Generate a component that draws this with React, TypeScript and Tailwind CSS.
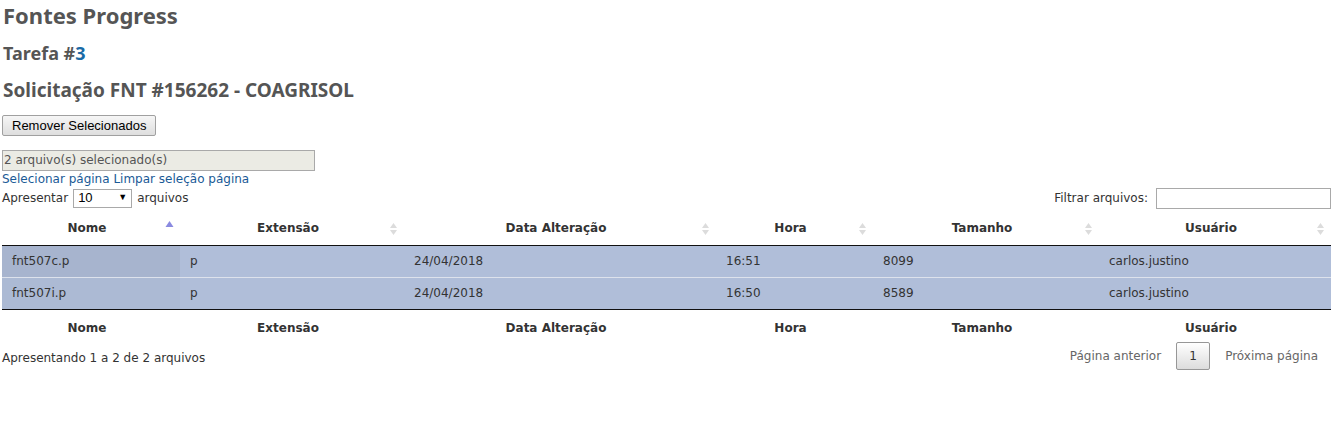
import React from "react"

const cols = [
  { label: "Nome", w: 178, sorted: true },
  { label: "Extensão", w: 224 },
  { label: "Data Alteração", w: 312 },
  { label: "Hora", w: 157 },
  { label: "Tamanho", w: 226 },
  { label: "Usuário", w: 232 },
]

const rows = [
  ["fnt507c.p", "p", "24/04/2018", "16:51", "8099", "carlos.justino"],
  ["fnt507i.p", "p", "24/04/2018", "16:50", "8589", "carlos.justino"],
]

function SortIcon({ sorted }: { sorted?: boolean }) {
  if (sorted) {
    return (
      <svg width="9" height="8" viewBox="0 0 9 8" className="absolute right-[6px] top-[8px]">
        <path d="M4.5 1 L8.5 7 L0.5 7 Z" fill="#8a8ae0" />
      </svg>
    )
  }
  return (
    <svg width="9" height="14" viewBox="0 0 9 14" className="absolute right-[6px] top-[10px]">
      <path d="M4.5 1 L8 6 L1 6 Z" fill="#dcdcdc" />
      <path d="M4.5 13 L8 8 L1 8 Z" fill="#dcdcdc" />
    </svg>
  )
}

export default function App() {
  const body = "font-['DejaVu_Sans',Verdana,sans-serif] text-[12px] text-[#333]"
  return (
    <div className={"bg-white w-[1337px] h-[430px] px-[2px] " + body}>
      <h1 className="font-['Noto_Sans',sans-serif] font-bold text-[22px] text-[#555] leading-[30px] pl-[1px]">
        Fontes Progress
      </h1>
      <h2 className="font-['Noto_Sans',sans-serif] font-bold text-[18px] text-[#555] leading-[24px] mt-[11px] pl-[1px]">
        Tarefa #<span className="text-[#1a6aa6]">3</span>
      </h2>
      <h2 className="font-['Noto_Sans',sans-serif] font-bold text-[19px] text-[#555] leading-[24px] mt-[13px] pl-[1px]">
        Solicitação FNT #156262 - COAGRISOL
      </h2>

      <button className="mt-[13px] h-[21px] px-[9px] border border-[#a0a0a0] rounded-[2px] bg-gradient-to-b from-[#f6f6f6] to-[#dedede] font-['Liberation_Sans',Arial,sans-serif] text-[13px] text-black leading-[19px]">
        Remover Selecionados
      </button>

      <div className="mt-[14px] w-[313px] h-[21px] border border-[#a9a9a9] bg-[#ebebe4] text-[#555] leading-[19px] pl-[1px]">
        2 arquivo(s) selecionado(s)
      </div>

      <div className="text-[#1a5a96] leading-[15px] mt-[1px]">
        <a>Selecionar página</a> <a>Limpar seleção página</a>
      </div>

      <div className="flex items-center justify-between h-[22px]">
        <div className="flex items-center">
          Apresentar
          <div className="ml-[5px] mr-[5px] w-[59px] h-[19px] border border-[#a9a9a9] flex items-center justify-between px-[4px] font-['Liberation_Sans',Arial,sans-serif] text-[13px] text-black">
            <span>10</span>
            <span className="text-[9px]">▼</span>
          </div>
          arquivos
        </div>
        <div className="flex items-center pr-[4px]">
          Filtrar arquivos:
          <div className="ml-[8px] w-[175px] h-[21px] border border-[#a9a9a9] bg-white" />
        </div>
      </div>

      <table className="table-fixed border-collapse w-[1329px] mt-[3px]">
        <colgroup>
          {cols.map((c) => (
            <col key={c.label} style={{ width: c.w }} />
          ))}
        </colgroup>
        <thead>
          <tr className="border-b border-[#111]">
            {cols.map((c) => (
              <th key={c.label} className="relative h-[33px] pl-[10px] pr-[18px] font-bold text-center text-[#333]">
                {c.label}
                <SortIcon sorted={c.sorted} />
              </th>
            ))}
          </tr>
        </thead>
        <tbody>
          {rows.map((r, i) => (
            <tr key={i} className={i > 0 ? "border-t border-[#dde2ec]" : ""}>
              {r.map((v, j) => (
                <td
                  key={j}
                  className={
                    "h-[32px] px-[10px] " +
                    (j === 0 ? (i === 0 ? "bg-[#a7b4ce]" : "bg-[#acbad4]") : "bg-[#b0bed9]")
                  }
                >
                  {v}
                </td>
              ))}
            </tr>
          ))}
        </tbody>
        <tfoot>
          <tr className="border-t border-[#111]">
            {cols.map((c) => (
              <th key={c.label} className="h-[33px] pt-[9px] pb-[5px] pl-[10px] pr-[18px] align-top font-bold text-center text-[#333]">
                {c.label}
              </th>
            ))}
          </tr>
        </tfoot>
      </table>

      <div className="flex items-start justify-between">
        <div className="pt-[7px]">Apresentando 1 a 2 de 2 arquivos</div>
        <div className="flex items-center text-[#666] pr-[17px]">
          <span>Página anterior</span>
          <span className="mx-[15px] w-[34px] h-[28px] flex items-center justify-center border border-[#979797] rounded-[2px] bg-gradient-to-b from-white to-[#dcdcdc] text-[#333]">
            1
          </span>
          <span>Próxima página</span>
        </div>
      </div>
    </div>
  )
}
